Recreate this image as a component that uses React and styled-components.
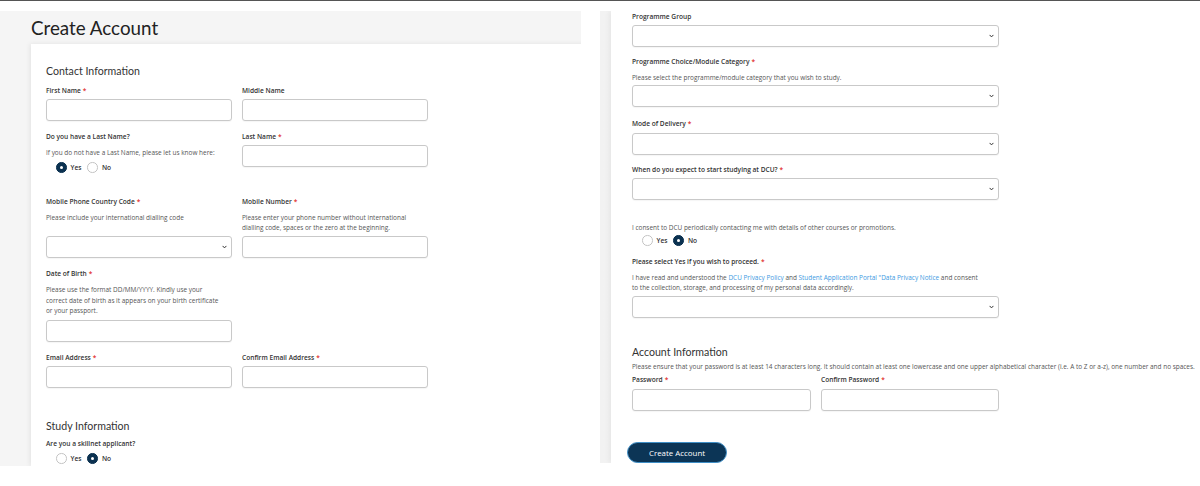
import React from 'react';
import styled, { createGlobalStyle } from 'styled-components';

const Global = createGlobalStyle`
  html, body { margin: 0; padding: 0; background: #fff; }
  body { font-family: "Open Sans", "Liberation Sans", sans-serif; color: #333; }
  * { box-sizing: border-box; }
`;

const Page = styled.div`
  width: 1200px;
  height: 486px;
  overflow: hidden;
  border-top: 1px solid #555;
`;

const Columns = styled.div`
  display: flex;
  align-items: flex-start;
  padding-top: 10px;
`;

const LeftPanel = styled.section`
  width: 581px;
  height: 455px;
  background: #f5f5f5;
  padding-left: 31px;
  display: flex;
  flex-direction: column;
  overflow: hidden;
`;

const Title = styled.h1`
  margin: 0;
  height: 33px;
  line-height: 33px;
  font-family: Lato, "Open Sans", sans-serif;
  font-weight: 400;
  font-size: 18.8px;
  color: #222;
`;

const Card = styled.div`
  flex: 1;
  width: 580px;
  background: #fff;
  box-shadow: -1px 0 5px rgba(0, 0, 0, 0.08);
  padding: 20px 0 0 15px;
`;

const RightPanel = styled.section`
  width: 600px;
  height: 452px;
  margin-left: 19px;
  background: linear-gradient(to right, #f2f2f2, #f7f7f7);
  padding-left: 11px;
  overflow: hidden;
  display: flex;
`;

const RightCard = styled.div`
  flex: 1;
  background: #fff;
  box-shadow: -2px 0 5px rgba(0, 0, 0, 0.05);
  padding: 1px 0 0 21px;
  display: flex;
  flex-direction: column;
  align-items: flex-start;
`;

const SectionHeading = styled.h2`
  margin: ${p => p.$mt || 0}px 0 ${p => p.$mb ?? 8}px;
  font-family: Lato, "Open Sans", sans-serif;
  font-weight: 400;
  font-size: 10.6px;
  line-height: 14px;
  color: #333;
`;

const Grid = styled.div`
  display: grid;
  grid-template-columns: ${p => p.$cols || '186px 186px'};
  column-gap: 10px;
  row-gap: 11px;
`;

const Field = styled.div`
  display: flex;
  flex-direction: column;
  width: ${p => p.$w || 'auto'};
  margin-top: ${p => p.$mt || 0}px;
`;

const Label = styled.div`
  font-size: 6.6px;
  font-weight: 600;
  line-height: 10px;
  color: #333;
  white-space: nowrap;
`;

const Req = styled.span`
  color: #e2322f;
  margin-left: 2px;
`;

const Help = styled.div`
  font-size: 6.45px;
  line-height: ${p => p.$lh || 10.4}px;
  color: #555;
  margin-top: ${p => p.$mt ?? 6}px;
  max-width: ${p => p.$maxW || 'none'};
  white-space: ${p => (p.$nowrap ? 'nowrap' : 'normal')};
`;

const Link = styled.span`
  color: #3d9ae2;
`;

const Input = styled.div`
  height: 22px;
  width: ${p => p.$w || '100%'};
  margin-top: ${p => p.$mt ?? 3}px;
  border: 1px solid #c9c9c9;
  border-radius: 3px;
  background: #fff;
  box-shadow: 0 1px 1px rgba(0, 0, 0, 0.04);
`;

const SelectBox = styled(Input)`
  display: flex;
  align-items: center;
  justify-content: flex-end;
  padding-right: 4px;
`;

const SelectPush = styled(SelectBox)`
  margin-top: auto;
`;

const Chevron = () => (
  <svg width="5" height="4" viewBox="0 0 5 4">
    <path d="M0.6 0.9 L2.5 2.9 L4.4 0.9" fill="none" stroke="#333" strokeWidth="1" />
  </svg>
);

const RadioGroup = styled.div`
  display: flex;
  align-items: center;
  height: 10px;
  padding-left: 10px;
  margin-top: ${p => p.$mt ?? 4}px;
  margin-bottom: ${p => p.$mb || 0}px;
`;

const Option = styled.label`
  display: flex;
  align-items: center;
  margin-right: 6px;
  font-size: 6.6px;
  font-weight: 600;
  color: #333;
`;

const Dot = styled.span`
  width: 10.5px;
  height: 10.5px;
  border-radius: 50%;
  margin-right: 4px;
  display: flex;
  align-items: center;
  justify-content: center;
  background: ${p => (p.$on ? '#0b3150' : '#fff')};
  border: 1px solid ${p => (p.$on ? '#0b3150' : '#c4c4c4')};
  &::after {
    content: '';
    width: 3px;
    height: 3px;
    border-radius: 50%;
    background: ${p => (p.$on ? '#fff' : 'transparent')};
  }
`;

const Button = styled.button`
  margin: 31px 0 0 -5px;
  width: 100px;
  height: 22px;
  border-radius: 11px;
  border: 1px solid #3f8fc7;
  background: #0c3556;
  color: #fff;
  font-family: "Open Sans", sans-serif;
  font-size: 7.9px;
  padding: 0;
`;

const YesNo = ({ value, mt, mb }) => (
  <RadioGroup $mt={mt} $mb={mb}>
    <Option><Dot $on={value === 'yes'} />Yes</Option>
    <Option><Dot $on={value === 'no'} />No</Option>
  </RadioGroup>
);

const Sel = ({ mt, w }) => (
  <SelectBox $mt={mt} $w={w}><Chevron /></SelectBox>
);

export default function App() {
  return (
    <Page>
      <Global />
      <Columns>
        <LeftPanel>
          <Title>Create Account</Title>
          <Card>
            <SectionHeading>Contact Information</SectionHeading>
            <Grid>
              <Field>
                <Label>First Name<Req>*</Req></Label>
                <Input />
              </Field>
              <Field>
                <Label>Middle Name</Label>
                <Input />
              </Field>
              <Field>
                <Label>Do you have a Last Name?</Label>
                <Help>If you do not have a Last Name, please let us know here:</Help>
                <YesNo value="yes" mt={4} mb={14} />
              </Field>
              <Field>
                <Label>Last Name<Req>*</Req></Label>
                <Input />
              </Field>
              <Field>
                <Label>Mobile Phone Country Code<Req>*</Req></Label>
                <Help>Please include your international dialling code</Help>
                <SelectPush><Chevron /></SelectPush>
              </Field>
              <Field>
                <Label>Mobile Number<Req>*</Req></Label>
                <Help $lh={10}>Please enter your phone number without international dialling code, spaces or the zero at the beginning.</Help>
                <Input />
              </Field>
              <Field>
                <Label>Date of Birth<Req>*</Req></Label>
                <Help $maxW="178px">Please use the format DD/MM/YYYY. Kindly use your correct date of birth as it appears on your birth certificate or your passport.</Help>
                <Input />
              </Field>
              <div />
              <Field>
                <Label>Email Address<Req>*</Req></Label>
                <Input />
              </Field>
              <Field>
                <Label>Confirm Email Address<Req>*</Req></Label>
                <Input />
              </Field>
            </Grid>
            <SectionHeading $mt={31} $mb={6}>Study Information</SectionHeading>
            <Label>Are you a skillnet applicant?</Label>
            <YesNo value="no" mt={5} />
          </Card>
        </LeftPanel>

        <RightPanel>
          <RightCard>
            <Field $w="367px">
              <Label>Programme Group</Label>
              <Sel />
            </Field>
            <Field $w="367px" $mt={10}>
              <Label>Programme Choice/Module Category<Req>*</Req></Label>
              <Help>Please select the programme/module category that you wish to study.</Help>
              <Sel mt={2} />
            </Field>
            <Field $w="367px" $mt={12}>
              <Label>Mode of Delivery<Req>*</Req></Label>
              <Sel mt={4} />
            </Field>
            <Field $w="367px" $mt={10}>
              <Label>When do you expect to start studying at DCU?<Req>*</Req></Label>
              <Sel mt={3} />
            </Field>
            <Field $w="367px" $mt={23}>
              <Help $mt={0} $lh={10}>I consent to DCU periodically contacting me with details of other courses or promotions.</Help>
              <YesNo value="no" mt={2} />
            </Field>
            <Field $w="367px" $mt={12}>
              <Label>Please select Yes if you wish to proceed.<Req>*</Req></Label>
              <Help $lh={10} $mt={6}>
                I have read and understood the <Link>DCU Privacy Policy</Link> and <Link>Student Application Portal "Data Privacy Notice</Link> and consent<br />
                to the collection, storage, and processing of my personal data accordingly.
              </Help>
              <Sel mt={3} />
            </Field>
            <SectionHeading $mt={27} $mb={3}>Account Information</SectionHeading>
            <Help $mt={0} $lh={10} $nowrap>Please ensure that your password is at least 14 characters long. It should contain at least one lowercase and one upper alphabetical character (i.e. A to Z or a-z), one number and no spaces.</Help>
            <Grid $cols="179px 178px">
              <Field $mt={3}>
                <Label>Password<Req>*</Req></Label>
                <Input $mt={4} />
              </Field>
              <Field $mt={3}>
                <Label>Confirm Password<Req>*</Req></Label>
                <Input $mt={4} />
              </Field>
            </Grid>
            <Button>Create Account</Button>
          </RightCard>
        </RightPanel>
      </Columns>
    </Page>
  );
}
